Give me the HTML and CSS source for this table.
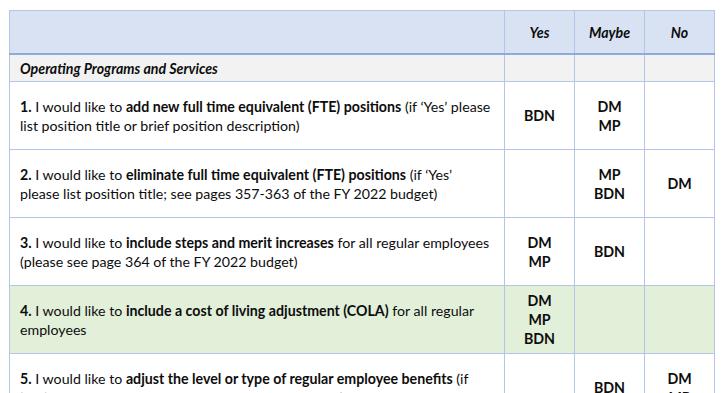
FILE: index.html
```html
<!DOCTYPE html>
<html>
<head>
<meta charset="utf-8">
<link rel="stylesheet" href="styles.css">
</head>
<body>
<div class="page">
<table class="survey">
  <colgroup>
    <col class="c-q">
    <col class="c-a">
    <col class="c-a">
    <col class="c-a">
  </colgroup>
  <thead>
    <tr class="head">
      <th class="q"></th>
      <th>Yes</th>
      <th>Maybe</th>
      <th>No</th>
    </tr>
  </thead>
  <tbody>
    <tr class="section">
      <td class="q">Operating Programs and Services</td>
      <td></td><td></td><td></td>
    </tr>
    <tr class="item">
      <td class="q"><b>1.</b> I would like to <b>add new full time equivalent (FTE) positions</b> (if ‘Yes’ please list position title or brief position description)</td>
      <td class="a">BDN</td>
      <td class="a">DM<br>MP</td>
      <td class="a"></td>
    </tr>
    <tr class="item">
      <td class="q"><b>2.</b> I would like to <b>eliminate full time equivalent (FTE) positions</b> (if ‘Yes’ please list position title; see pages 357-363 of the FY 2022 budget)</td>
      <td class="a"></td>
      <td class="a">MP<br>BDN</td>
      <td class="a">DM</td>
    </tr>
    <tr class="item">
      <td class="q"><b>3.</b> I would like to <b>include steps and merit increases</b> for all regular employees (please see page 364 of the FY 2022 budget)</td>
      <td class="a">DM<br>MP</td>
      <td class="a">BDN</td>
      <td class="a"></td>
    </tr>
    <tr class="item green">
      <td class="q"><b>4.</b> I would like to <b>include a cost of living adjustment (COLA)</b> for all regular employees</td>
      <td class="a">DM<br>MP<br>BDN</td>
      <td class="a"></td>
      <td class="a"></td>
    </tr>
    <tr class="item">
      <td class="q"><b>5.</b> I would like to <b>adjust the level or type of regular employee benefits</b> (if ‘Yes’ please see pages 70-73 of the FY 2022 budget)</td>
      <td class="a"></td>
      <td class="a">BDN</td>
      <td class="a">DM<br>MP</td>
    </tr>
  </tbody>
</table>
</div>
</body>
</html>
```

FILE: styles.css
```css
html, body {
  margin: 0;
  padding: 0;
  background: #ffffff;
}

.page {
  padding: 10px 0 0 9px;
}

.survey {
  border-collapse: collapse;
  table-layout: fixed;
  width: 705px;
  font-family: Lato, "Liberation Sans", sans-serif;
  font-size: 14.2px;
  line-height: 19px;
  color: #0d0d0d;
}

.c-q { width: 495px; }
.c-a { width: 70px; }

.survey th,
.survey td {
  border: 1px solid #b4c6e7;
  padding: 0 10px;
  vertical-align: middle;
}

.head th {
  height: 42px;
  background: #d9e2f3;
  font-weight: bold;
  font-style: italic;
  text-align: center;
  border-bottom: 2px solid #8eaadb;
}

.section td {
  height: 26px;
  background: #f2f2f2;
  font-weight: bold;
  font-style: italic;
}

.item td {
  height: 67px;
}

.item .a {
  text-align: center;
  font-weight: bold;
  padding: 0 4px;
}

.green td {
  background: #e2efd9;
}
```
